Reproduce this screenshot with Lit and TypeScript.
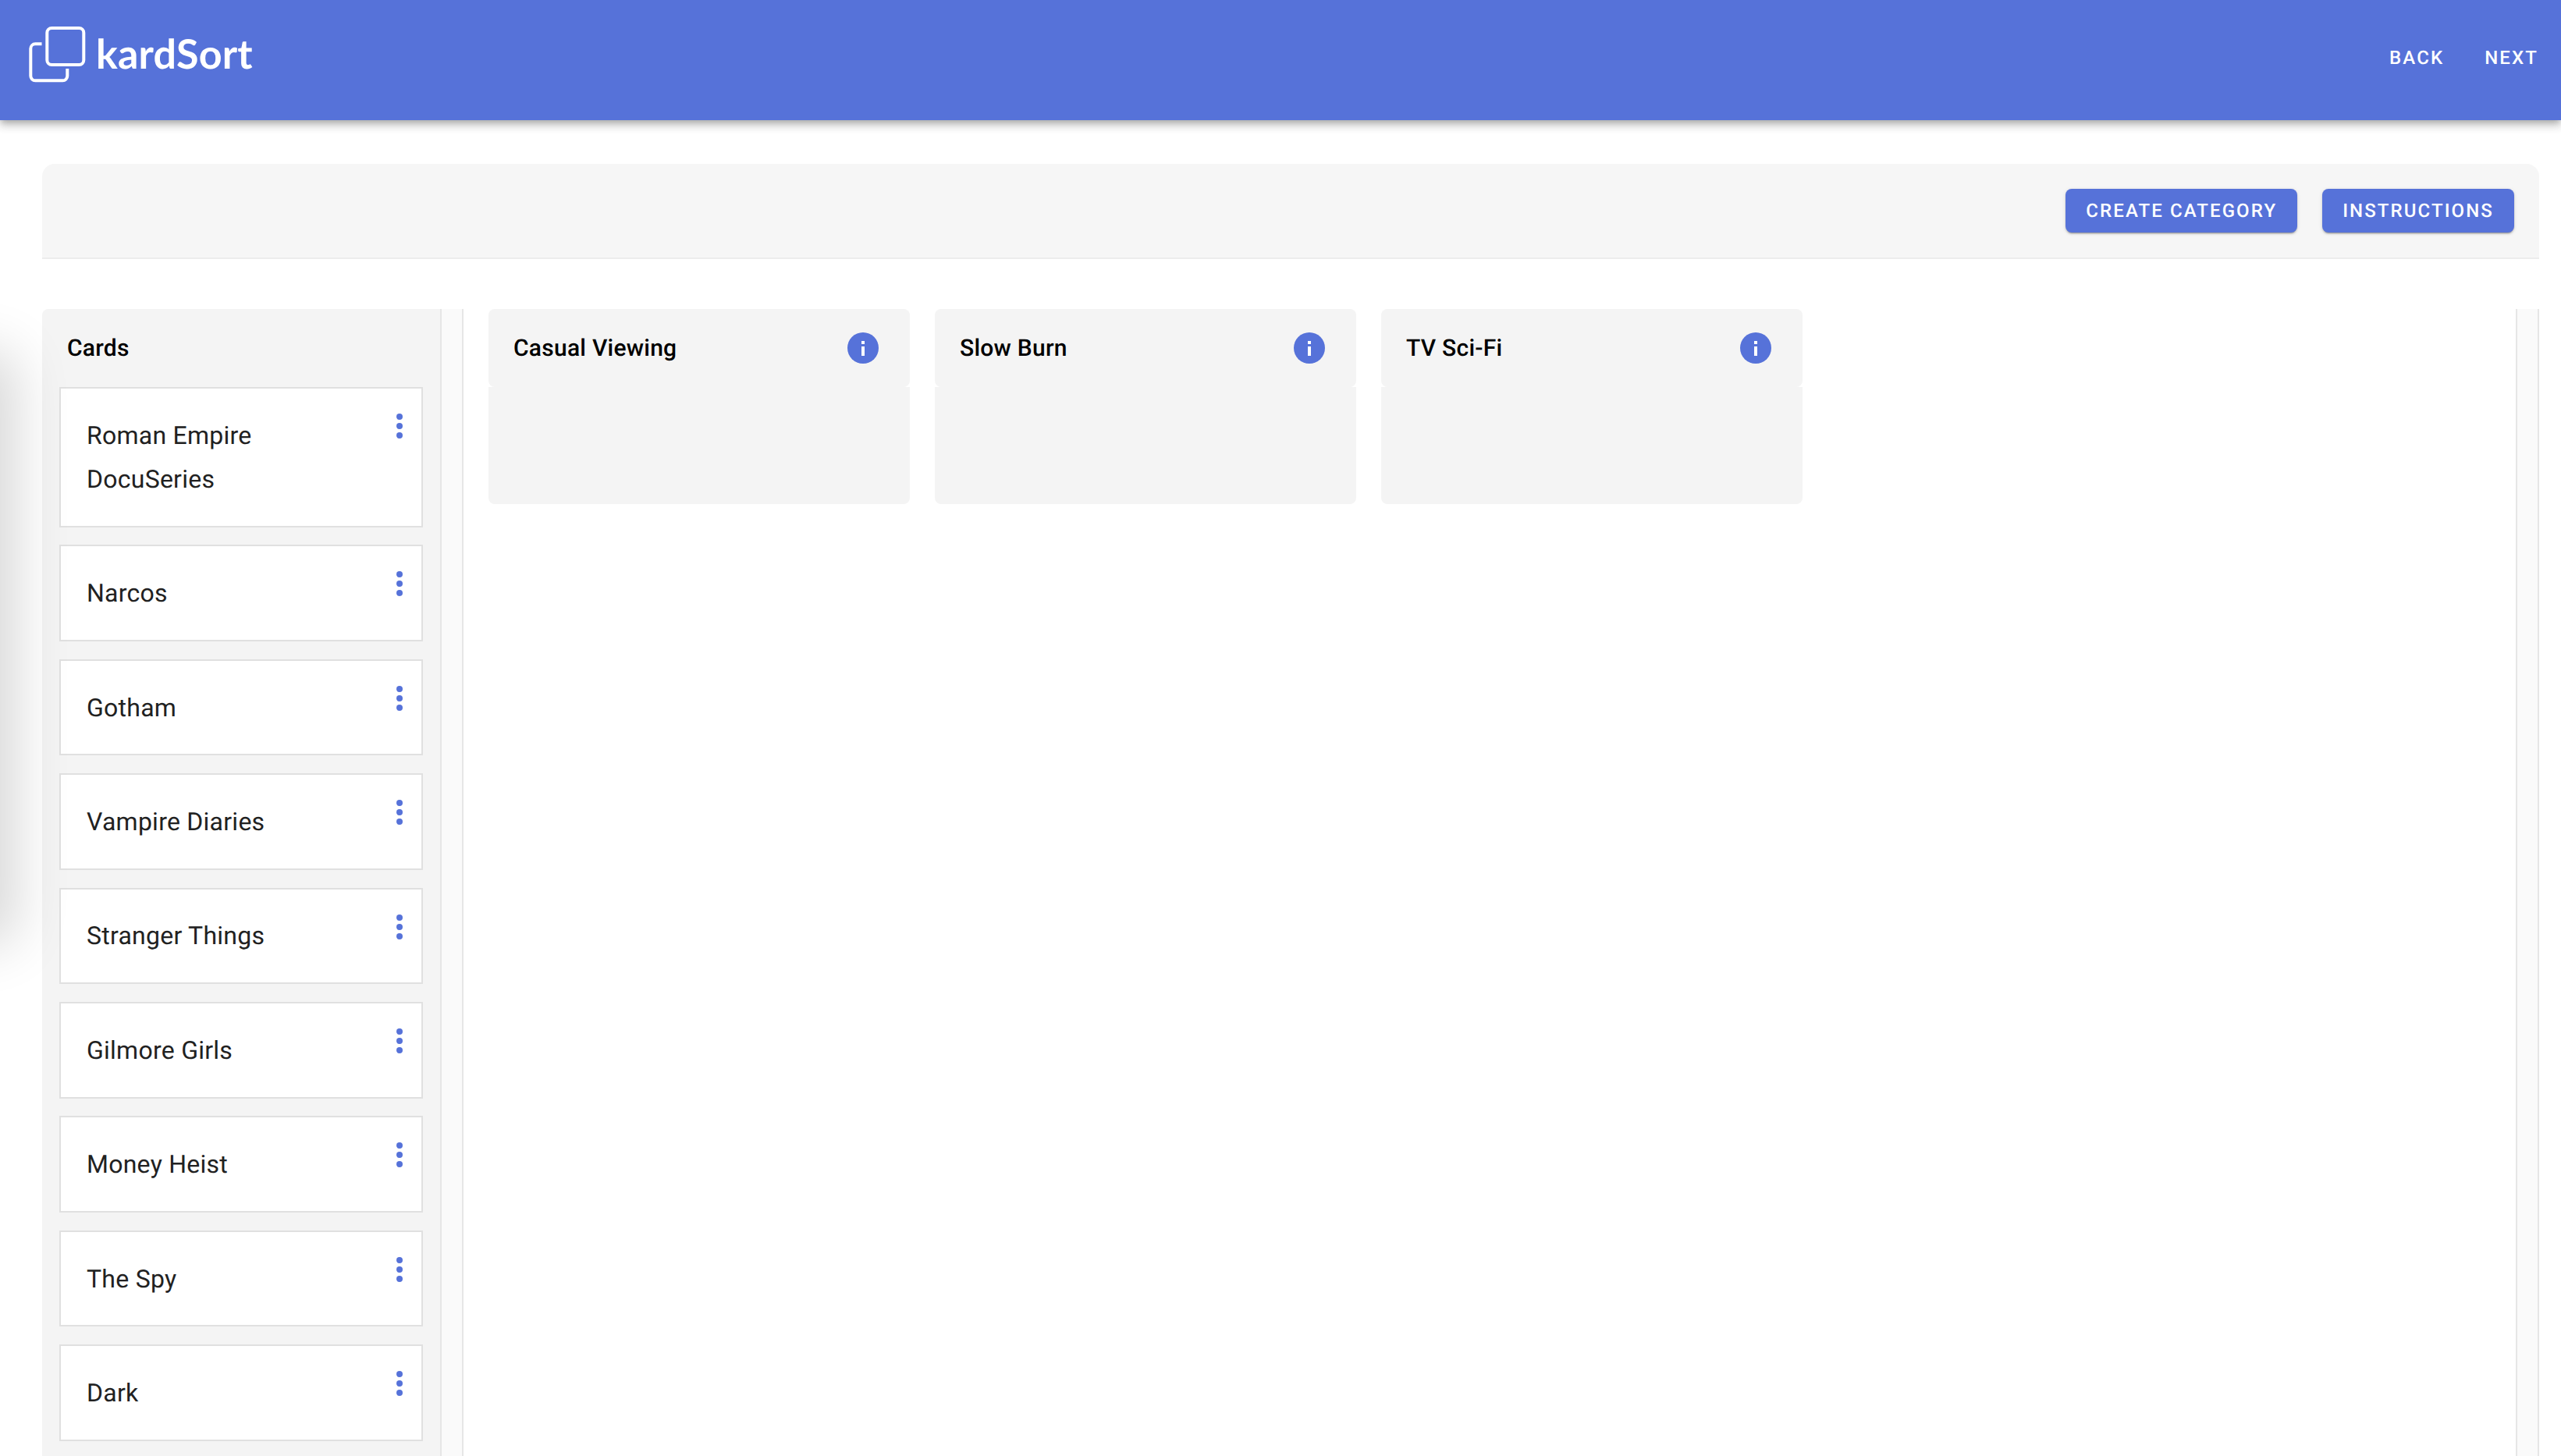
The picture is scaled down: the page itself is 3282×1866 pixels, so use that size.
import { LitElement, html, css, svg } from "lit";
import { customElement } from "lit/decorators.js";

const CARDS = ["Roman Empire DocuSeries", "Narcos", "Gotham", "Vampire Diaries", "Stranger Things", "Gilmore Girls", "Money Heist", "The Spy", "Dark"];
const CATS = ["Casual Viewing", "Slow Burn", "TV Sci-Fi"];

@customElement("app-root")
export class AppRoot extends LitElement {
  static styles = css`
    :host { display: block; height: 1866px; overflow: hidden; position: relative; background: #fff;
      font-family: Roboto, "Liberation Sans", sans-serif; text-rendering: geometricPrecision; }
    .bar { height: 154px; background: #5672d9; display: flex; align-items: center; justify-content: space-between;
      box-shadow: 0 4px 8px -2px rgba(0,0,0,.25), 0 8px 10px 1px rgba(0,0,0,.1), 0 3px 14px 2px rgba(0,0,0,.08);
      position: relative; z-index: 2; }
    .brand { display: flex; align-items: center; padding: 0 0 12px 37px; }
    .brand svg { width: 74px; height: 74px; display: block; }
    .word { font-family: Lato, sans-serif; font-weight: 700; font-size: 52px; color: #fff; margin: 0 0 4px 12px; line-height: 1; letter-spacing: 0.2px; }
    .nav { display: flex; gap: 52px; padding: 0 29px 6px 0; }
    .nav span { color: #fff; font-size: 24px; font-weight: 500; letter-spacing: 2.1px; line-height: 1; }
    .page { padding: 56px 28px 0 54px; }
    .toolbar { height: 122px; box-sizing: border-box; background: #f6f6f6; border-bottom: 2px solid #ececec;
      border-radius: 16px 16px 0 0; display: flex; justify-content: flex-end; align-items: flex-start; gap: 32px; padding: 32px 32px 0 0; }
    .btn { height: 56px; box-sizing: border-box; background: #5672d9; color: #fff; border-radius: 8px; font-size: 24px; font-weight: 500;
      letter-spacing: 2.1px; display: flex; align-items: center; padding: 0 26px;
      box-shadow: 0 3px 1px -2px rgba(0,0,0,.2), 0 2px 2px 0 rgba(0,0,0,.14), 0 1px 5px 0 rgba(0,0,0,.12); }
    .board { display: flex; margin-top: 64px; height: 1470px; }
    .cards { width: 510px; flex: none; background: #f4f4f4; border-right: 2px solid #e6e6e6; border-radius: 8px 0 0 0; }
    .cards-title { height: 100px; display: flex; align-items: center; padding-left: 32px; font-size: 30px; font-weight: 500; color: #000; letter-spacing: 0.25px; }
    .list { display: flex; flex-direction: column; gap: 22.8px; padding: 0 22px 0 22px; }
    .card { position: relative; background: #fff; border: 2px solid #e0e0e0; box-sizing: border-box;
      display: flex; align-items: center; padding: 31.8px 90px 31.8px 33px; font-size: 32px; line-height: 56px; color: #212121; letter-spacing: 0.25px; }
    .dots { position: absolute; top: 28px; right: 20px; width: 16px; height: 40px; }
    .track { width: 26px; flex: none; background: #fafafa; border-right: 2px solid #e6e6e6; }
    .main { flex: 1; display: flex; gap: 32px; padding-left: 32px; align-items: flex-start; }
    .cat { width: 540px; flex: none; }
    .cat-head { height: 100px; background: #f4f4f4; border-radius: 8px; display: flex; align-items: center; justify-content: space-between;
      padding: 0 40px 0 32px; font-size: 30px; font-weight: 500; color: #000; letter-spacing: 0.25px; }
    .cat-body { height: 150px; background: #f4f4f4; border-radius: 0 0 8px 8px; }
    .cat-head svg { width: 40px; height: 40px; display: block; }
    .rail { width: 26px; flex: none; background: #fafafa; border-left: 2px solid #e6e6e6; border-right: 2px solid #e6e6e6; }
    .shade { position: absolute; left: -60px; top: 470px; width: 60px; height: 720px; border-radius: 8px;
      box-shadow: 0 0 70px 20px rgba(0,0,0,.16); z-index: 1; }
  `;

  render() {
    return html`
      <div class="bar">
        <div class="brand">
          <svg viewBox="0 0 74 74" fill="none" stroke="#fff" stroke-width="4">
            <rect x="23.3" y="2" width="47" height="47" rx="6"></rect>
            <path d="M16.5 22.3H8.3a6 6 0 0 0-6 6V63.3a6 6 0 0 0 6 6H43.3a6 6 0 0 0 6-6V54"></path>
          </svg>
          <span class="word">kardSort</span>
        </div>
        <div class="nav"><span>BACK</span><span>NEXT</span></div>
      </div>
      <div class="shade"></div>
      <div class="page">
        <div class="toolbar">
          <div class="btn">CREATE CATEGORY</div>
          <div class="btn">INSTRUCTIONS</div>
        </div>
        <div class="board">
          <section class="cards">
            <div class="cards-title">Cards</div>
            <div class="list">
              ${CARDS.map((c) => html`<div class="card"><span>${c}</span>
                <svg class="dots" viewBox="0 0 16 40" fill="#5672d9">
                  ${svg`<circle cx="8" cy="8" r="4"></circle><circle cx="8" cy="20" r="4"></circle><circle cx="8" cy="32" r="4"></circle>`}
                </svg></div>`)}
            </div>
          </section>
          <div class="track"></div>
          <div class="main">
            ${CATS.map((c) => html`<div class="cat">
              <div class="cat-head"><span>${c}</span>
                <svg viewBox="0 0 40 40"><circle cx="20" cy="20" r="20" fill="#5672d9"></circle>
                  <rect x="18" y="18" width="4" height="12" fill="#fff"></rect><rect x="18" y="11" width="4" height="4" fill="#fff"></rect></svg>
              </div>
              <div class="cat-body"></div>
            </div>`)}
          </div>
          <div class="rail"></div>
        </div>
      </div>
    `;
  }
}
